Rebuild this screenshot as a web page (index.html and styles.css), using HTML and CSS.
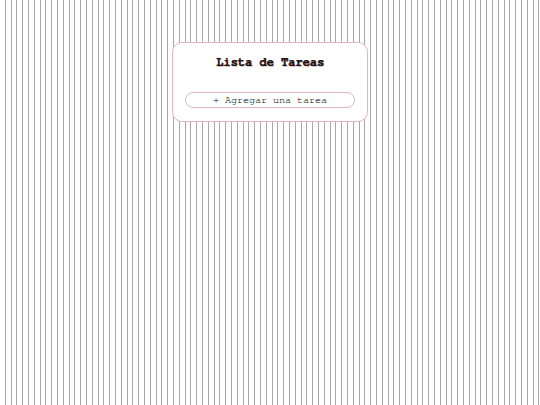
FILE: index.html
```html
<!DOCTYPE html>
<html lang="es">
<head>
<meta charset="utf-8">
<title>Lista de Tareas</title>
<link rel="stylesheet" href="styles.css">
</head>
<body>
<main class="card">
  <h1 class="title">Lista de Tareas</h1>
  <button class="add-btn" type="button">+ Agregar una tarea</button>
</main>
</body>
</html>
```
FILE: styles.css
```css
html, body {
  margin: 0;
  padding: 0;
}
html {
  min-height: 100%;
  background-color: #ffffff;
  background-image: repeating-linear-gradient(90deg, #ffffff 0px, #ffffff 4.8px, #a8a8a8 4.8px, #a8a8a8 5.8px);
}
body {
  font-family: "Nimbus Mono PS", "Nimbus Mono L", "FreeMono", "Courier 10 Pitch", "Courier New", "Liberation Mono", monospace;
  padding-top: 42px;
}
.card {
  box-sizing: border-box;
  width: 196px;
  margin: 0 auto;
  padding: 12px 12px 13px;
  background: #ffffff;
  border: 1px solid #e2b4c4;
  border-radius: 10px;
  display: flex;
  flex-direction: column;
  align-items: stretch;
}
.title {
  margin: 0;
  font-size: 12px;
  line-height: 14px;
  font-weight: bold;
  text-align: center;
  color: #1e1010;
  text-shadow: 0.6px 0 0 rgba(40, 15, 20, 0.8), 1px 1px 0 rgba(120, 60, 70, 0.3);
}
.add-btn {
  margin-top: 23px;
  height: 16px;
  padding: 0;
  border: 1px solid #e2b4c4;
  border-radius: 8px;
  background: #ffffff;
  font-family: inherit;
  font-size: 10px;
  line-height: 14px;
  color: #333333;
  text-shadow: 0.3px 0 0 rgba(50, 50, 50, 0.5);
  text-align: center;
}
```
